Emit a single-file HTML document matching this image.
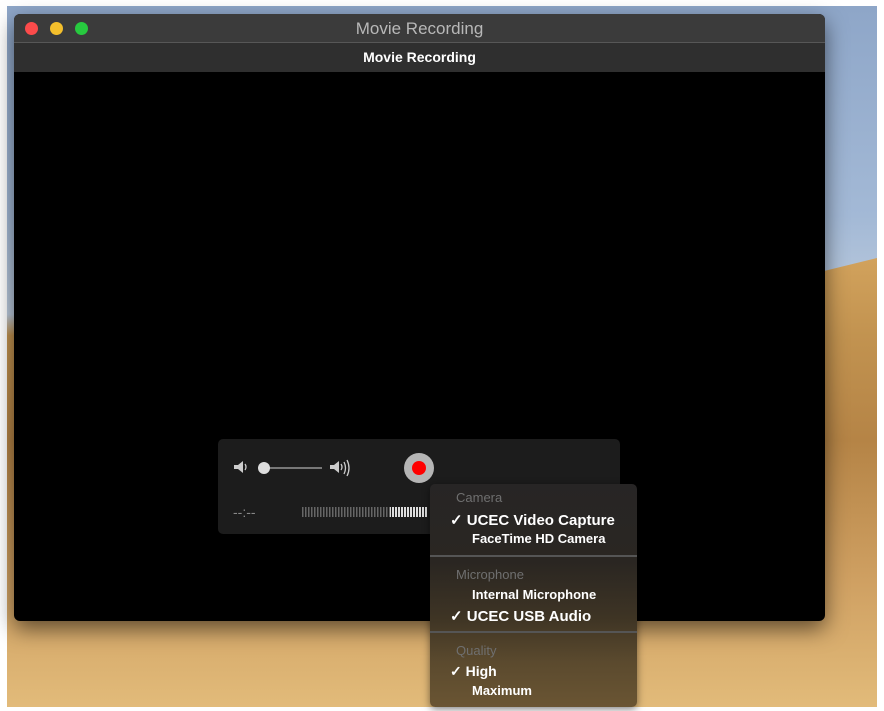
<!DOCTYPE html>
<html><head><meta charset="utf-8"><style>
*{margin:0;padding:0;box-sizing:border-box}
body{width:884px;height:711px;background:#fff;position:relative;overflow:hidden;font-family:"Liberation Sans",sans-serif}
.desk{position:absolute;left:7px;top:6px;width:870px;height:701px;
background:linear-gradient(180deg,#8ea6c8 0%,#a3b9d6 30%,#bccbdd 44%,#c29350 47%,#b58446 62%,#cfa062 82%,#e2bb7a 100%)}
.win{position:absolute;left:14px;top:14px;width:811px;height:607px;background:#000;border-radius:6px;overflow:hidden;box-shadow:0 8px 22px rgba(0,0,0,.55)}
.t1{height:29px;background:#3b3b3b;border-bottom:1px solid #575757;color:#b8b8b8;text-align:center;font-size:17px;line-height:29px}
.t2{height:29px;background:#2f2f2f;color:#fff;text-align:center;font-size:14px;font-weight:bold;line-height:28px}
.dot{position:absolute;top:8px;width:13px;height:13px;border-radius:50%}
.ctrl{position:absolute;left:218px;top:439px;width:402px;height:95px;background:#1c1c1c;border-radius:5px}
.menu{position:absolute;left:430px;top:484px;width:207px;height:223px;border-radius:5px;
background:linear-gradient(180deg,#272525 0%,#2a2622 35%,#3e3424 60%,#5b4a2e 80%,#6a5533 100%);box-shadow:0 2px 8px rgba(0,0,0,.5);color:#fff;font-size:14px}
.menu div{position:absolute;white-space:nowrap;font-weight:bold}
.menu div.h{color:#6f6f6f;font-size:13px;left:26px;font-weight:normal}
.menu div.sep{left:0;width:207px;height:2px;background:#555}
</style></head><body>
<div class="desk"></div>
<svg width="884" height="711" style="position:absolute;left:0;top:0">
<defs><linearGradient id="d" x1="0" y1="0" x2="0" y2="1"><stop offset="0" stop-color="#d2a25c"/><stop offset="1" stop-color="#c29350"/></linearGradient></defs>
<polygon points="560,336 877,258 877,336" fill="url(#d)"/>
</svg>
<div class="win">
<div class="t1">Movie Recording</div>
<div class="t2">Movie Recording</div>
<div class="dot" style="left:11px;background:#fc4b4b"></div>
<div class="dot" style="left:36px;background:#f4bf2c"></div>
<div class="dot" style="left:61px;background:#27c93f"></div>
</div>
<div class="ctrl">
<svg width="402" height="95" style="position:absolute;left:0;top:0">
<path d="M16 26h4l5-4v12l-5-4h-4z" fill="#ccc"/><path d="M27 25q2 3 0 6" stroke="#ccc" fill="none" stroke-width="1.3"/>
<rect x="46" y="28" width="58" height="2" fill="#777"/><circle cx="46" cy="29" r="6" fill="#ddd"/>
<path d="M112 26h4l5-4v12l-5-4h-4z" fill="#ccc"/><path d="M123 25q2 3 0 6M126 23q3 6 0 12M129 21q4 8 0 16" stroke="#ccc" fill="none" stroke-width="1.3"/>
<circle cx="201" cy="29" r="15" fill="#b5b5b5"/><circle cx="201" cy="29" r="7" fill="#f00"/>
<text x="15" y="78" fill="#888" font-size="14" font-family="Liberation Sans">--:--</text>
<defs><pattern id="p" width="3" height="8" patternUnits="userSpaceOnUse"><rect width="1.5" height="8" fill="#666"/></pattern>
<pattern id="q" width="3" height="8" patternUnits="userSpaceOnUse"><rect width="2" height="8" fill="#ddd"/></pattern></defs>
<rect x="83" y="68" width="90" height="10" fill="url(#p)"/>
<rect x="172" y="68" width="38" height="10" fill="url(#q)"/>
</svg>
</div>
<div class="menu">
<div class="h" style="top:6px">Camera</div>
<div style="top:27px;left:20px;font-size:15px">✓ UCEC Video Capture</div>
<div style="top:47px;left:42px;font-size:13px">FaceTime HD Camera</div>
<div class="sep" style="top:71px"></div>
<div class="h" style="top:83px">Microphone</div>
<div style="top:103px;left:42px;font-size:13px">Internal Microphone</div>
<div style="top:123px;left:20px;font-size:15px">✓ UCEC USB Audio</div>
<div class="sep" style="top:147px"></div>
<div class="h" style="top:159px">Quality</div>
<div style="top:179px;left:20px;font-size:14px">✓ High</div>
<div style="top:199px;left:42px;font-size:13px">Maximum</div>
</div>
</body></html>
